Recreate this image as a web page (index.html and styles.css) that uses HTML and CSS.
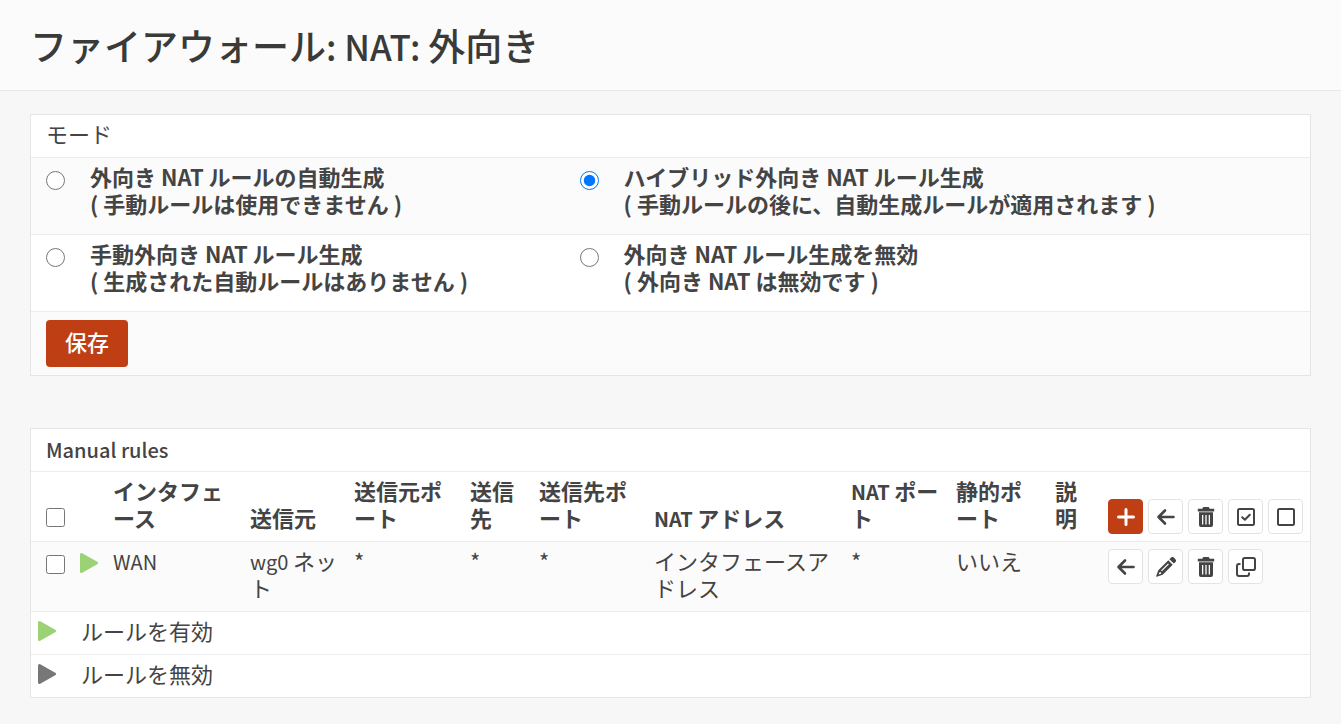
FILE: index.html
```html
<!DOCTYPE html>
<html lang="ja">

<head>
    <meta charset="UTF-8">
    <meta name="viewport" content="width=device-width, initial-scale=1.0">
    <title>ファイアウォール: NAT: 外向き</title>
    <link rel="stylesheet" href="styles.css">
</head>

<body>
    <!-- icons -->
    <svg class="sprite" aria-hidden="true">
        <symbol id="i-play" viewBox="0 0 18 20">
            <path d="M1.500 1.500L16.500 10L1.500 18.500z" fill="currentColor" stroke="currentColor" stroke-width="3" stroke-linejoin="round" />
        </symbol>
        <symbol id="i-plus" viewBox="0 0 20 20">
            <path d="M10 2.500v15M2.500 10h15" fill="none" stroke="currentColor" stroke-width="3" stroke-linecap="round" />
        </symbol>
        <symbol id="i-arrow" viewBox="0 0 20 20">
            <path d="M17.500 10H2.500M9 3.500L2.500 10L9 16.500" fill="none" stroke="currentColor" stroke-width="2.600" stroke-linecap="round" stroke-linejoin="round" />
        </symbol>
        <symbol id="i-trash" viewBox="0 0 20 20">
            <path d="M1.800 1.800h4.500l1-1.800h5.400l1 1.800h4.500v2.600H1.800z" fill="currentColor" />
            <path d="M3 5.300h14V18a2 2 0 0 1-2 2H5a2 2 0 0 1-2-2zM6 8v9.500h1.300V8zM9.350 8v9.500h1.300V8zM12.700 8v9.500H14V8z" fill="currentColor" fill-rule="evenodd" />
        </symbol>
        <symbol id="i-check" viewBox="0 0 20 20">
            <rect x="2" y="2" width="16" height="16" rx="1.500" fill="none" stroke="currentColor" stroke-width="2" />
            <path d="M6.200 10.200l2.700 2.600 4.900-5" fill="none" stroke="currentColor" stroke-width="2" stroke-linecap="round" stroke-linejoin="round" />
        </symbol>
        <symbol id="i-square" viewBox="0 0 20 20">
            <rect x="2" y="2" width="16" height="16" rx="1.500" fill="none" stroke="currentColor" stroke-width="2" />
        </symbol>
        <symbol id="i-pencil" viewBox="0 0 20 20">
            <path d="M13.400 2.200l1.400-1.400a2.300 2.300 0 0 1 3.300 0l1.100 1.100a2.300 2.300 0 0 1 0 3.300l-1.400 1.400z" fill="currentColor" />
            <path d="M12.300 3.300l4.400 4.400L7.200 17.200c-.4.400-.8.700-1.300.8L.9 19.800c-.5.100-.8-.2-.7-.7l1.800-5c.1-.5.400-.9.800-1.300zM12 6.400l-7 7 .9.900 7-7zM3.500 15.200l-.9 2.400 2.500-.9v-1.500z" fill="currentColor" fill-rule="evenodd" />
        </symbol>
        <symbol id="i-clone" viewBox="0 0 20 20">
            <rect x="7" y="1" width="12" height="12" rx="1.800" fill="none" stroke="currentColor" stroke-width="2" />
            <path d="M4.500 7H3a2 2 0 0 0-2 2v8a2 2 0 0 0 2 2h8a2 2 0 0 0 2-2v-1.500" fill="none" stroke="currentColor" stroke-width="2" />
        </symbol>
    </svg>

    <header class="page-head">
        <h1>ファイアウォール<span class="en">: NAT: </span>外向き</h1>
    </header>

    <main class="page-content">
        <form class="box mode">
            <h2 class="mode-title">モード</h2>
            <div class="mode-row striped">
                <div class="mode-item">
                    <input type="radio" name="mode" id="mode-auto">
                    <label for="mode-auto">外向き NAT ルールの自動生成<br>( 手動ルールは使用できません )</label>
                </div>
                <div class="mode-item">
                    <input type="radio" name="mode" id="mode-hybrid" checked>
                    <label for="mode-hybrid">ハイブリッド外向き NAT ルール生成<br>( 手動ルールの後に、自動生成ルールが適用されます )</label>
                </div>
            </div>
            <div class="mode-row">
                <div class="mode-item">
                    <input type="radio" name="mode" id="mode-manual">
                    <label for="mode-manual">手動外向き NAT ルール生成<br>( 生成された自動ルールはありません )</label>
                </div>
                <div class="mode-item">
                    <input type="radio" name="mode" id="mode-off">
                    <label for="mode-off">外向き NAT ルール生成を無効<br>( 外向き NAT は無効です )</label>
                </div>
            </div>
            <div class="mode-save striped">
                <button type="button" class="btn-save">保存</button>
            </div>
        </form>

        <section class="box rules">
            <h2 class="rules-title">Manual rules</h2>
            <table>
                <colgroup>
                    <col class="c-check">
                    <col class="c-state">
                    <col class="c-if">
                    <col class="c-src">
                    <col class="c-sport">
                    <col class="c-dst">
                    <col class="c-dport">
                    <col class="c-addr">
                    <col class="c-nport">
                    <col class="c-static">
                    <col class="c-descr">
                    <col class="c-act">
                </colgroup>
                <thead>
                    <tr>
                        <th><input type="checkbox" aria-label="すべて選択"></th>
                        <th></th>
                        <th>インタフェース</th>
                        <th>送信元</th>
                        <th>送信元ポート</th>
                        <th>送信先</th>
                        <th>送信先ポート</th>
                        <th><span class="en">NAT </span>アドレス</th>
                        <th><span class="en">NAT </span>ポート</th>
                        <th>静的ポート</th>
                        <th>説明</th>
                        <th>
                            <div class="actions">
                                <button type="button" class="btn-icon primary" aria-label="追加"><svg><use href="#i-plus" /></svg></button>
                                <button type="button" class="btn-icon" aria-label="移動"><svg><use href="#i-arrow" /></svg></button>
                                <button type="button" class="btn-icon" aria-label="削除"><svg><use href="#i-trash" /></svg></button>
                                <button type="button" class="btn-icon" aria-label="有効"><svg><use href="#i-check" /></svg></button>
                                <button type="button" class="btn-icon" aria-label="無効"><svg><use href="#i-square" /></svg></button>
                            </div>
                        </th>
                    </tr>
                </thead>
                <tbody>
                    <tr class="striped">
                        <td><input type="checkbox" aria-label="ルールを選択"></td>
                        <td><svg class="play on"><use href="#i-play" /></svg></td>
                        <td><span class="en">WAN</span></td>
                        <td><span class="en">wg0 </span>ネット</td>
                        <td>*</td>
                        <td>*</td>
                        <td>*</td>
                        <td>インタフェースアドレス</td>
                        <td>*</td>
                        <td>いいえ</td>
                        <td></td>
                        <td>
                            <div class="actions">
                                <button type="button" class="btn-icon" aria-label="移動"><svg><use href="#i-arrow" /></svg></button>
                                <button type="button" class="btn-icon" aria-label="編集"><svg><use href="#i-pencil" /></svg></button>
                                <button type="button" class="btn-icon" aria-label="削除"><svg><use href="#i-trash" /></svg></button>
                                <button type="button" class="btn-icon" aria-label="複製"><svg><use href="#i-clone" /></svg></button>
                            </div>
                        </td>
                    </tr>
                </tbody>
            </table>
            <ul class="legend">
                <li><svg class="play on"><use href="#i-play" /></svg>ルールを有効</li>
                <li><svg class="play off"><use href="#i-play" /></svg>ルールを無効</li>
            </ul>
        </section>
    </main>
</body>

</html>
```
FILE: styles.css
```css
* {
    margin: 0;
    padding: 0;
    box-sizing: border-box;
}

li {
    list-style: none;
}

body {
    background-color: #f7f7f7;
    color: #444;
    font-family: "Noto Sans CJK JP", sans-serif;
    font-size: 22px;
    line-height: 27px;
}

button {
    font-family: inherit;
    cursor: pointer;
}

.sprite {
    display: none;
}

/* 英字は少し小さく */
.en {
    font-size: 20px;
    line-height: 1;
}

.page-head {
    padding: 20px 30px;
    background-color: #fbfbfb;
    border-bottom: 1px solid #e8e8e8;
}

.page-head h1 {
    color: #3a3a38;
    font-size: 37px;
    font-weight: 500;
    line-height: 50px;
}

.page-head .en {
    font-size: 35px;
}

.page-content {
    padding: 23px 30px;
}

.box {
    background-color: #fff;
    border: 1px solid #e5e5e5;
}

.striped {
    background-color: #fbfbfb;
}

input[type="radio"],
input[type="checkbox"] {
    display: block;
    width: 19px;
    height: 19px;
}

/* モード */
.mode {
    margin-bottom: 52px;
}

.mode-title {
    padding: 5px 15px 10px;
    font-size: 22px;
    font-weight: 400;
}

.mode-row {
    display: grid;
    grid-template-columns: 534fr 746fr;
    border-top: 1px solid #ededed;
}

.mode-item {
    display: flex;
    align-items: flex-start;
    gap: 25px;
    padding: 5px 15px 17px;
    font-weight: 700;
}

.mode-item input {
    flex: none;
    margin-top: 8px;
}

.mode-save {
    padding: 8px 15px;
    border-top: 1px solid #ededed;
}

.btn-save {
    display: block;
    padding: 8px 19px 12px;
    border: 0;
    border-radius: 4px;
    background-color: #c03e14;
    color: #fff;
    font-size: 22px;
    font-weight: 500;
    line-height: 27px;
}

/* ルール */
.rules-title {
    padding: 7px 15px 8px;
    font-size: 20px;
    font-weight: 500;
}

table {
    width: 100%;
    table-layout: fixed;
    border-collapse: separate;
    border-spacing: 0;
}

th,
td {
    padding: 5px 8px 10px;
    border-top: 1px solid #ededed;
    text-align: left;
    vertical-align: top;
}

th {
    font-weight: 700;
    vertical-align: bottom;
}

th:first-child,
td:first-child {
    padding-left: 15px;
    padding-right: 0;
}

th:last-child,
td:last-child {
    padding-top: 7px;
    padding-bottom: 7px;
}

th input[type="checkbox"] {
    margin-bottom: 4px;
}

td input[type="checkbox"] {
    margin-top: 8px;
}

.c-check { width: 41px; }
.c-state { width: 33px; }
.c-if { width: 137px; }
.c-src { width: 104px; }
.c-sport { width: 116px; }
.c-dst { width: 69px; }
.c-dport { width: 115px; }
.c-addr { width: 197px; }
.c-nport { width: 105px; }
.c-static { width: 99px; }
.c-descr { width: 53px; }
.c-act { width: 210px; }

.play {
    display: block;
    flex: none;
    width: 18px;
    height: 20px;
}

td .play {
    margin-top: 6px;
}

.on {
    color: #9bd275;
}

.off {
    color: #777;
}

.actions {
    display: flex;
    gap: 5px;
}

.btn-icon {
    display: flex;
    flex: none;
    align-items: center;
    justify-content: center;
    width: 35px;
    height: 35px;
    border: 1px solid #e3e3e3;
    border-radius: 4px;
    background-color: #fff;
    color: #444;
}

.btn-icon.primary {
    border-color: #c03e14;
    background-color: #c03e14;
    color: #fff;
}

.btn-icon svg {
    width: 20px;
    height: 20px;
}

.legend li {
    display: flex;
    align-items: center;
    gap: 25px;
    padding: 5px 7px 10px;
    border-top: 1px solid #ededed;
}
```
